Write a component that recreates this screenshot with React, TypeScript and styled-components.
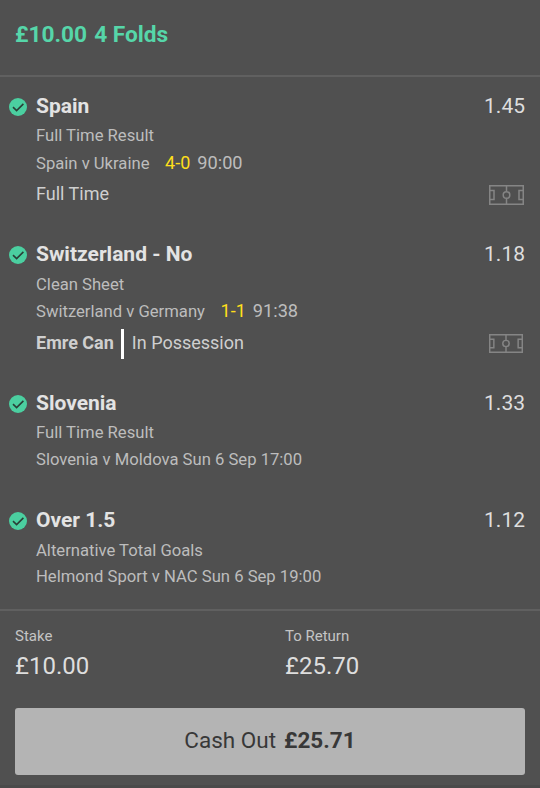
import React from 'react';
import styled, { createGlobalStyle } from 'styled-components';

const Global = createGlobalStyle`
  *{box-sizing:border-box}
  body{margin:0;background:#505050;font-family:Roboto,sans-serif;color:#e0e0e0}
`;
const Slip = styled.main`width:540px;height:788px;background:#505050;display:flex;flex-direction:column;border-bottom:3px solid #4a4a4a;overflow:hidden;`;
const Header = styled.header`height:77px;padding:21px 15px 0;border-bottom:2px solid #606060;font-size:22.7px;line-height:28px;font-weight:700;color:#56d6a9;display:flex;gap:7px;`;
const Selections = styled.div`height:534px;border-bottom:2px solid #606060;`;
const Selection = styled.section<{ $h: number }>`height:${p => p.$h}px;padding:14px 15px 0 9px;display:grid;grid-template-columns:27px 1fr;align-items:start;`;
const Tick = styled.svg`width:18px;height:18px;margin-top:7px;display:block;`;
const Row = styled.div<{ $h: number }>`height:${p => p.$h}px;display:flex;align-items:center;white-space:nowrap;`;
const Name = styled.h2`margin:0;flex:1;font-size:21px;font-weight:700;color:#e3e3e3;`;
const Odds = styled.span`font-size:21px;color:#dedede;`;
const Detail = styled.span`font-size:16.65px;color:#bdbdbd;padding-top:2px;`;
const Score = styled.span`font-size:18px;color:#ffdf1b;margin-left:15.6px;`;
const Clock = styled.span`font-size:18.2px;color:#bdbdbd;margin-left:7px;`;
const Status = styled.span`flex:1;font-size:18px;color:#cfcfcf;display:flex;align-items:center;`;
const Player = styled.b`font-weight:700;`;
const Bar = styled.i`width:3px;height:30px;background:#fff;margin:4px 8px 0 7px;`;
const Pitch = styled.svg<{ $w: number; $h: number; $drop: number }>`width:${p => p.$w}px;height:${p => p.$h}px;margin:${p => p.$drop}px ${p => 36 - p.$w}px 0 0;display:block;`;
const Totals = styled.div`height:97px;display:grid;grid-template-columns:270px 1fr;padding:14px 15px 0;`;
const Label = styled.div`font-size:15px;line-height:22px;color:#c4c4c4;`;
const Amount = styled.div`font-size:24px;line-height:38px;color:#dedede;`;
const CashOut = styled.button`width:510px;height:67px;margin:0 15px;padding:0 0 4px;border:0;border-radius:3px;background:#b4b4b4;font:22.5px Roboto,sans-serif;color:#383838;display:flex;align-items:center;justify-content:center;gap:8px;`;

interface Bet {
  name: string; odds: string; market: string; match: string; h: number; rows: number[];
  score?: string; clock?: string; player?: string; status?: string; pitch?: [number, number, number];
}

const bets: Bet[] = [
  { name: 'Spain', odds: '1.45', market: 'Full Time Result', match: 'Spain v Ukraine', score: '4-0', clock: '90:00', status: 'Full Time', h: 148, rows: [27, 29, 32], pitch: [35, 20, 4] },
  { name: 'Switzerland - No', odds: '1.18', market: 'Clean Sheet', match: 'Switzerland v Germany', score: '1-1', clock: '91:38', player: 'Emre Can', status: 'In Possession', h: 149, rows: [29, 25, 38], pitch: [34, 19, 3] },
  { name: 'Slovenia', odds: '1.33', market: 'Full Time Result', match: 'Slovenia v Moldova Sun 6 Sep 17:00', h: 117, rows: [27, 27] },
  { name: 'Over 1.5', odds: '1.12', market: 'Alternative Total Goals', match: 'Helmond Sport v NAC Sun 6 Sep 19:00', h: 117, rows: [29, 23] },
];

function PitchIcon({ size }: { size: [number, number, number] }) {
  const [w, h, drop] = size;
  return <Pitch $w={w} $h={h} $drop={drop} viewBox="0 0 35 20" preserveAspectRatio="none" fill="none" stroke="#858585" strokeWidth="1.5">
    <path d="M.75.75h33.5v18.5H.75zM17.5 1v5.5M17.5 13.5V19M1 5.5h4v9H1M34 5.5h-4v9h4" /><circle cx="17.5" cy="10" r="3.3" />
  </Pitch>;
}

export default function App() {
  return <><Global /><Slip>
    <Header><span>£10.00</span><span>4 Folds</span></Header>
    <Selections>{bets.map(b => <Selection key={b.name} $h={b.h}>
      <Tick viewBox="0 0 18 18"><circle cx="9" cy="9" r="9" fill="#4bcfa0" /><path d="M4 9.2l3.6 3.4L14.4 5.9" fill="none" stroke="#2a3f37" strokeWidth="1.6" /></Tick>
      <div>
        <Row $h={30}><Name>{b.name}</Name><Odds>{b.odds}</Odds></Row>
        <Row $h={b.rows[0]}><Detail>{b.market}</Detail></Row>
        <Row $h={b.rows[1]}><Detail>{b.match}</Detail>{b.score && <><Score>{b.score}</Score><Clock>{b.clock}</Clock></>}</Row>
        {b.pitch && <Row $h={b.rows[2]}><Status>{b.player && <><Player>{b.player}</Player><Bar /></>}{b.status}</Status>
          <PitchIcon size={b.pitch} /></Row>}
      </div>
    </Selection>)}</Selections>
    <Totals><div><Label>Stake</Label><Amount>£10.00</Amount></div><div><Label>To Return</Label><Amount>£25.70</Amount></div></Totals>
    <CashOut><span>Cash Out</span><b>£25.71</b></CashOut>
  </Slip></>;
}
